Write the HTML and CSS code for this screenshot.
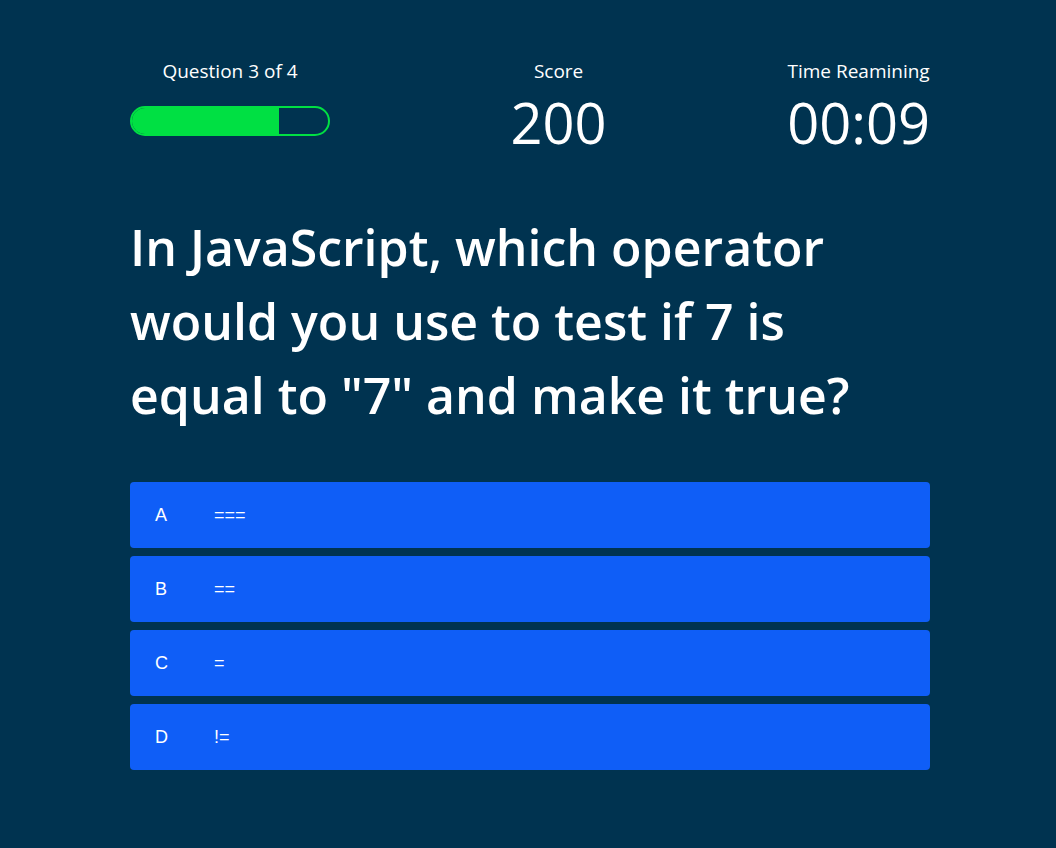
FILE: index.html
```html
<!DOCTYPE html>
<html lang="en">
<head>
<meta charset="utf-8">
<title>Quiz</title>
<link rel="stylesheet" href="styles.css">
</head>
<body>
<main class="quiz">
  <header class="hud">
    <div class="hud-item hud-progress">
      <p class="hud-label">Question 3 of 4</p>
      <div class="progress"><div class="progress-fill" style="width: 75%"></div></div>
    </div>
    <div class="hud-item">
      <p class="hud-label">Score</p>
      <p class="hud-value">200</p>
    </div>
    <div class="hud-item">
      <p class="hud-label">Time Reamining</p>
      <p class="hud-value">00:09</p>
    </div>
  </header>
  <h1 class="question">In JavaScript, which operator would you use to test if 7 is equal to "7" and make it true?</h1>
  <div class="choices">
    <button class="choice"><span class="choice-letter">A</span><span class="choice-text">===</span></button>
    <button class="choice"><span class="choice-letter">B</span><span class="choice-text">==</span></button>
    <button class="choice"><span class="choice-letter">C</span><span class="choice-text">=</span></button>
    <button class="choice"><span class="choice-letter">D</span><span class="choice-text">!=</span></button>
  </div>
</main>
</body>
</html>
```
FILE: styles.css
```css
* { box-sizing: border-box; }
html, body { margin: 0; }
body {
  background: #003350;
  color: #ffffff;
  font-family: "Open Sans", "Noto Sans", sans-serif;
  padding: 58px 0 0 4px;
  min-height: 848px;
}
.quiz {
  width: 800px;
  margin: 0 auto;
}
.hud {
  display: flex;
  justify-content: space-between;
  align-items: flex-start;
}
.hud-item {
  display: flex;
  flex-direction: column;
  align-items: center;
}
.hud-progress { width: 200px; }
.hud-label {
  margin: 0;
  font-size: 19px;
  line-height: 26px;
}
.hud-value {
  margin: 0;
  font-size: 56px;
  line-height: 77px;
  font-weight: 500;
}
.progress {
  margin-top: 22px;
  width: 200px;
  height: 30px;
  border: 2px solid #00e043;
  border-radius: 15px;
  overflow: hidden;
}
.progress-fill {
  height: 100%;
  background: #00e043;
}
.question {
  margin: 49px 0 0;
  font-size: 50px;
  line-height: 74px;
  font-weight: 600;
}
.choices {
  margin-top: 50px;
  display: flex;
  flex-direction: column;
  gap: 8px;
}
.choice {
  display: flex;
  align-items: center;
  height: 66px;
  padding: 0 25px;
  border: none;
  border-radius: 4px;
  background: #0f5ef7;
  color: #ffffff;
  font-family: "Liberation Sans", Arial, sans-serif;
  font-size: 18px;
  text-align: left;
}
.choice-letter { width: 59px; }
```
